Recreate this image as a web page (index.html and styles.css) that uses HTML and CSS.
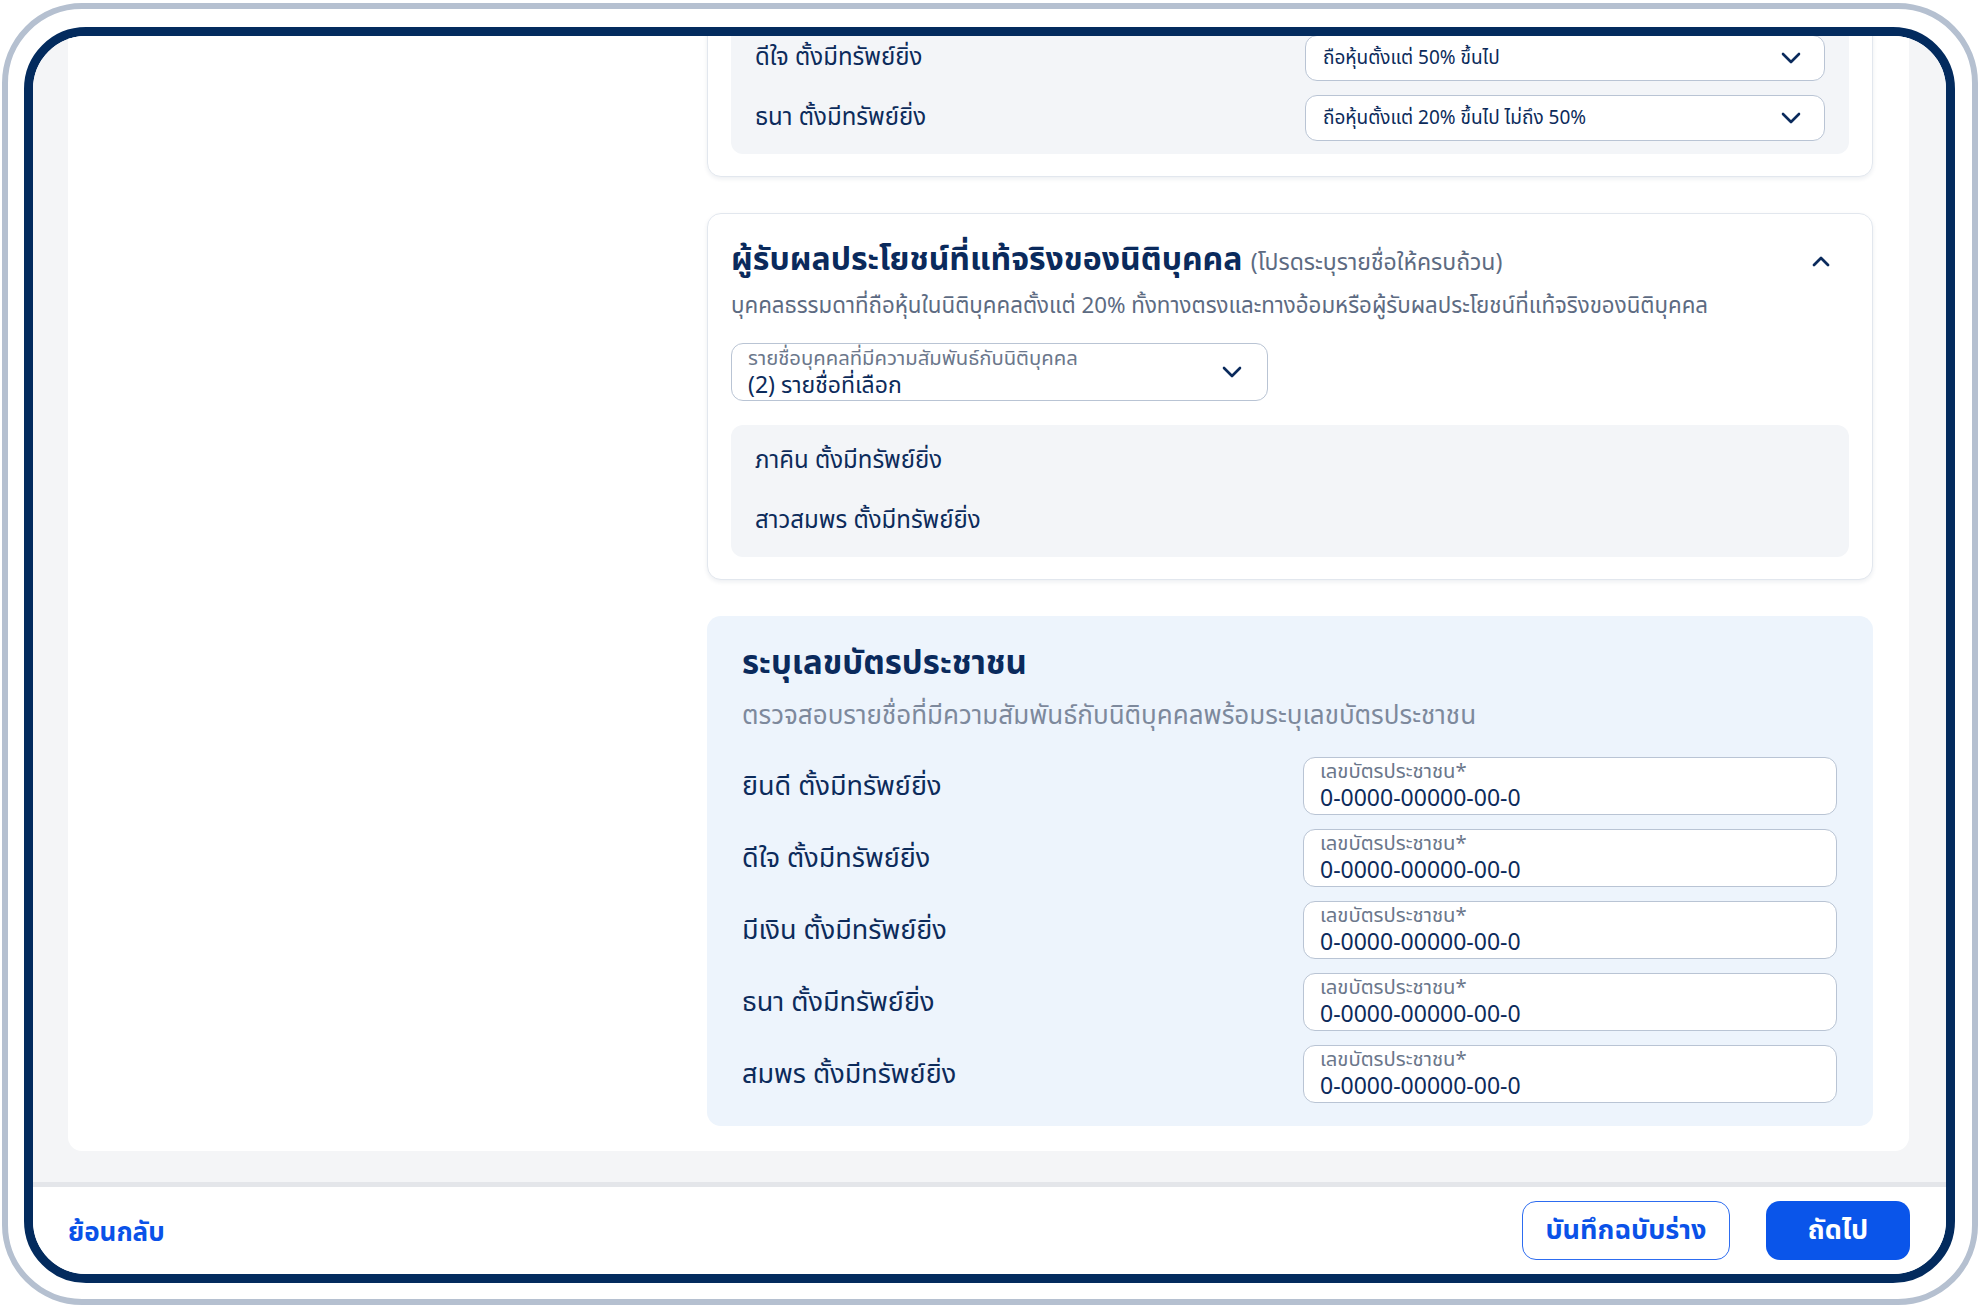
FILE: index.html
```html
<html>
    <head>
        <link rel="stylesheet" href="styles.css">
    </head>
    <body>
        <div class="device">
            <div class="screen">
                <div class="main">
                    <div class="panel">
                        <div class="side"></div>
                        <div class="stack">

                            <!-- shareholders (scrolled, top part out of view) -->
                            <div class="card">
                                <div class="card-head">
                                    <h2 class="card-title">สัดส่วนการถือหุ้น</h2>
                                </div>
                                <div class="soft-box">
                                    <div class="row">
                                        <span class="name">ยินดี ตั้งมีทรัพย์ยิ่ง</span>
                                        <div class="select">
                                            <span>ถือหุ้นตั้งแต่ 20% ขึ้นไป ไม่ถึง 50%</span>
                                            <svg class="chev" viewBox="0 0 24 24"><path d="M4 8l8 8 8-8"/></svg>
                                        </div>
                                    </div>
                                    <div class="row">
                                        <span class="name">ดีใจ ตั้งมีทรัพย์ยิ่ง</span>
                                        <div class="select">
                                            <span>ถือหุ้นตั้งแต่ 50% ขึ้นไป</span>
                                            <svg class="chev" viewBox="0 0 24 24"><path d="M4 8l8 8 8-8"/></svg>
                                        </div>
                                    </div>
                                    <div class="row">
                                        <span class="name">ธนา ตั้งมีทรัพย์ยิ่ง</span>
                                        <div class="select">
                                            <span>ถือหุ้นตั้งแต่ 20% ขึ้นไป ไม่ถึง 50%</span>
                                            <svg class="chev" viewBox="0 0 24 24"><path d="M4 8l8 8 8-8"/></svg>
                                        </div>
                                    </div>
                                </div>
                            </div>

                            <!-- beneficial owners -->
                            <div class="card card-owners">
                                <div class="card-head">
                                    <h2 class="card-title">ผู้รับผลประโยชน์ที่แท้จริงของนิติบุคคล <span class="hint">(โปรดระบุรายชื่อให้ครบถ้วน)</span></h2>
                                    <svg class="chev-up" viewBox="0 0 24 24"><path d="M5 15l7-7 7 7"/></svg>
                                </div>
                                <p class="card-desc">บุคคลธรรมดาที่ถือหุ้นในนิติบุคคลตั้งแต่ 20% ทั้งทางตรงและทางอ้อมหรือผู้รับผลประโยชน์ที่แท้จริงของนิติบุคคล</p>
                                <div class="picker">
                                    <div class="picker-text">
                                        <span class="field-label">รายชื่อบุคคลที่มีความสัมพันธ์กับนิติบุคคล</span>
                                        <span class="picker-value">(2) รายชื่อที่เลือก</span>
                                    </div>
                                    <svg class="chev" viewBox="0 0 24 24"><path d="M4 8l8 8 8-8"/></svg>
                                </div>
                                <div class="soft-box picked">
                                    <div class="row"><span class="name">ภาคิน ตั้งมีทรัพย์ยิ่ง</span></div>
                                    <div class="row"><span class="name">สาวสมพร ตั้งมีทรัพย์ยิ่ง</span></div>
                                </div>
                            </div>

                            <!-- id numbers -->
                            <div class="id-card">
                                <h2 class="id-title">ระบุเลขบัตรประชาชน</h2>
                                <p class="id-desc">ตรวจสอบรายชื่อที่มีความสัมพันธ์กับนิติบุคคลพร้อมระบุเลขบัตรประชาชน</p>
                                <div class="id-list">
                                    <div class="id-row">
                                        <span class="id-name">ยินดี ตั้งมีทรัพย์ยิ่ง</span>
                                        <div class="input">
                                            <span class="field-label">เลขบัตรประชาชน*</span>
                                            <span class="input-value">0-0000-00000-00-0</span>
                                        </div>
                                    </div>
                                    <div class="id-row">
                                        <span class="id-name">ดีใจ ตั้งมีทรัพย์ยิ่ง</span>
                                        <div class="input">
                                            <span class="field-label">เลขบัตรประชาชน*</span>
                                            <span class="input-value">0-0000-00000-00-0</span>
                                        </div>
                                    </div>
                                    <div class="id-row">
                                        <span class="id-name">มีเงิน ตั้งมีทรัพย์ยิ่ง</span>
                                        <div class="input">
                                            <span class="field-label">เลขบัตรประชาชน*</span>
                                            <span class="input-value">0-0000-00000-00-0</span>
                                        </div>
                                    </div>
                                    <div class="id-row">
                                        <span class="id-name">ธนา ตั้งมีทรัพย์ยิ่ง</span>
                                        <div class="input">
                                            <span class="field-label">เลขบัตรประชาชน*</span>
                                            <span class="input-value">0-0000-00000-00-0</span>
                                        </div>
                                    </div>
                                    <div class="id-row">
                                        <span class="id-name">สมพร ตั้งมีทรัพย์ยิ่ง</span>
                                        <div class="input">
                                            <span class="field-label">เลขบัตรประชาชน*</span>
                                            <span class="input-value">0-0000-00000-00-0</span>
                                        </div>
                                    </div>
                                </div>
                            </div>

                        </div>
                    </div>
                </div>
                <div class="footer">
                    <a class="back">ย้อนกลับ</a>
                    <div class="actions">
                        <button class="btn btn-outline">บันทึกฉบับร่าง</button>
                        <button class="btn btn-primary">ถัดไป</button>
                    </div>
                </div>
            </div>
        </div>
    </body>
</html>
```

FILE: styles.css
```css
* {
    box-sizing: border-box;
}
body {
    margin: 0;
    width: 1980px;
    height: 1305px;
    overflow: hidden;
    background: #fff;
    font-family: "Noto Sans Thai", "Noto Sans", "Liberation Sans", sans-serif;
    color: #0c2b5b;
}
h2, p {
    margin: 0;
}

.device {
    margin: 3px 2px 0;
    height: 1302px;
    border: 6px solid #b5c0d0;
    border-radius: 80px;
    padding: 18px 17px 16px 16px;
}
.screen {
    height: 100%;
    border: 9px solid #032b5e;
    border-radius: 62px;
    overflow: hidden;
    display: flex;
    flex-direction: column;
}

.main {
    flex: 1;
    min-height: 0;
    overflow: hidden;
    background: #f4f5f7;
    display: flex;
    flex-direction: column;
    justify-content: flex-end;
    padding: 0 37px 31px 35px;
}
.panel {
    flex-shrink: 0;
    background: #fff;
    border-radius: 14px;
    display: grid;
    grid-template-columns: 603px 1fr;
    padding: 0 36px 25px;
}
.stack {
    display: flex;
    flex-direction: column;
    gap: 36px;
}

/* white cards */
.card {
    background: #fff;
    border: 1px solid #e2e7ee;
    border-radius: 14px;
    box-shadow: 0 2px 4px rgba(20, 45, 90, 0.08);
    padding: 26px 23px 22px;
}
.card-head {
    display: flex;
    align-items: center;
    justify-content: space-between;
}
.card-title {
    font-size: 32px;
    font-weight: 700;
    line-height: 40px;
    color: #0a2a5c;
}
.hint {
    font-size: 23px;
    font-weight: 400;
    color: #5d6b82;
}
.chev-up {
    width: 24px;
    height: 24px;
    margin-right: 16px;
    fill: none;
    stroke: #0a2a5c;
    stroke-width: 2.8;
    stroke-linecap: round;
    stroke-linejoin: round;
}
.card-desc {
    font-size: 22.3px;
    line-height: 30px;
    color: #5d6b82;
    margin-top: 8px;
}

.soft-box {
    background: #f3f5f8;
    border-radius: 12px;
    padding: 6px 24px;
    margin-top: 20px;
}
.row {
    height: 60px;
    display: flex;
    align-items: center;
    justify-content: space-between;
}
.name {
    font-size: 24px;
    color: #0c2b5b;
}
.select {
    width: 520px;
    height: 46px;
    background: #fff;
    border: 1.5px solid #b9c4d4;
    border-radius: 12px;
    display: flex;
    align-items: center;
    justify-content: space-between;
    padding: 0 21px 0 17px;
    font-size: 19px;
    color: #0c2b5b;
}
.chev {
    width: 24px;
    height: 24px;
    fill: none;
    stroke: #0a2a5c;
    stroke-width: 2.6;
    stroke-linecap: round;
    stroke-linejoin: round;
}

.picker {
    width: 537px;
    height: 58px;
    margin-top: 22px;
    border: 1.5px solid #b9c4d4;
    border-radius: 12px;
    display: flex;
    align-items: center;
    justify-content: space-between;
    padding: 0 23px 0 16px;
}
.picker-text {
    display: flex;
    flex-direction: column;
    gap: 3px;
    padding-top: 2px;
}
.field-label {
    font-size: 20.3px;
    line-height: 22px;
    color: #6b778b;
}
.picker-value {
    font-size: 23px;
    line-height: 26px;
    color: #0c2b5b;
}
.picked {
    margin-top: 24px;
}

/* id number block */
.id-card {
    background: #edf4fc;
    border-radius: 14px;
    padding: 28px 36px 23px 35px;
}
.id-title {
    font-size: 33px;
    font-weight: 700;
    line-height: 40px;
    color: #0a2a5c;
}
.id-desc {
    font-size: 26px;
    line-height: 32px;
    color: #7d899c;
    margin-top: 16px;
}
.id-list {
    margin-top: 25px;
    display: flex;
    flex-direction: column;
    gap: 14px;
}
.id-row {
    display: flex;
    align-items: center;
    justify-content: space-between;
}
.id-name {
    font-size: 27px;
    color: #0c2b5b;
}
.input {
    width: 534px;
    height: 58px;
    background: #fff;
    border: 1.5px solid #b9c4d4;
    border-radius: 12px;
    display: flex;
    flex-direction: column;
    gap: 3px;
    padding: 3px 16px 0;
}
.input-value {
    font-size: 23px;
    line-height: 26px;
    color: #0c2b5b;
}

/* bottom bar */
.footer {
    flex-shrink: 0;
    height: 92px;
    border-top: 5px solid #e4e6ea;
    background: #fff;
    display: flex;
    align-items: center;
    justify-content: space-between;
    padding: 0 36px 0 35px;
}
.back {
    font-size: 26px;
    font-weight: 700;
    color: #0a52e8;
    padding-top: 4px;
}
.actions {
    display: flex;
    gap: 36px;
}
.btn {
    height: 59px;
    border-radius: 14px;
    font-family: inherit;
    font-size: 27px;
    font-weight: 700;
    padding: 0 16px;
}
.btn-outline {
    width: 208px;
    background: #fff;
    border: 1.5px solid #2d6cf0;
    color: #0a52e8;
}
.btn-primary {
    width: 144px;
    background: #0a55ea;
    border: none;
    color: #fff;
}
```
